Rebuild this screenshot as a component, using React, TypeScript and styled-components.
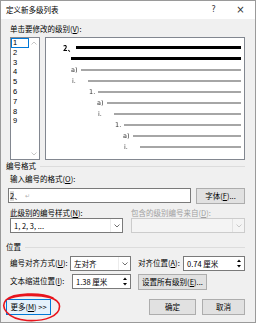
import React from 'react';
import styled, { createGlobalStyle } from 'styled-components';

const GlobalStyle = createGlobalStyle`
  html, body {
    margin: 0;
    padding: 0;
    background: #fff;
  }
  body {
    font-family: "Noto Sans CJK SC", "Noto Sans", sans-serif;
    font-size: 7.5px;
    color: #000;
  }
`;

const Dialog = styled.div`
  position: relative;
  width: 256px;
  height: 323px;
  box-sizing: border-box;
  border: 1px solid #9a9a9a;
  background: #f0f0f0;
  display: flex;
  flex-direction: column;
  overflow: hidden;
`;

const TitleBar = styled.div`
  height: 18px;
  background: #fff;
  display: flex;
  align-items: center;
  padding-left: 5px;
  padding-right: 1px;
`;

const Title = styled.span`
  flex: 1;
  line-height: 10px;
`;

const TitleButton = styled.span`
  width: 27px;
  text-align: center;
  font-family: "DejaVu Sans", sans-serif;
  font-size: ${(p: { $big?: boolean }) => (p.$big ? '10px' : '8px')};
  color: #333;
  line-height: 10px;
`;

const Body = styled.div`
  display: flex;
  flex-direction: column;
  padding: 0 10px 0 4px;
`;

const FieldLabel = styled.div<{ $top?: number; $disabled?: boolean; $flush?: boolean }>`
  margin-top: ${(p) => p.$top ?? 0}px;
  padding-left: ${(p) => (p.$flush ? 0 : 5)}px;
  line-height: 10px;
  white-space: nowrap;
  color: ${(p) => (p.$disabled ? '#a0a0a0' : '#000')};
`;

const TopRow = styled.div`
  margin-top: 3px;
  padding-left: 5px;
  height: 123px;
  display: flex;
  gap: 5px;
`;

const LevelList = styled.div`
  width: 30px;
  box-sizing: border-box;
  border: 1px solid #828790;
  background: #fff;
  display: flex;
`;

const LevelItems = styled.div`
  flex: 1;
  display: flex;
  flex-direction: column;
  font-family: "Liberation Sans", sans-serif;
  font-size: 7.5px;
`;

const LevelItem = styled.div<{ $selected?: boolean }>`
  height: 9.8px;
  box-sizing: border-box;
  padding-left: ${(p) => (p.$selected ? 1 : 2)}px;
  border: ${(p) => (p.$selected ? '1px solid #0078d7' : 'none')};
  line-height: ${(p) => (p.$selected ? 7.8 : 9.8)}px;
`;

const ScrollTrack = styled.div`
  width: 10px;
  display: flex;
  flex-direction: column;
  justify-content: space-between;
  align-items: center;
  padding: 3px 0;
`;

const Preview = styled.div`
  flex: 1;
  box-sizing: border-box;
  border: 1px solid #828790;
  background: #fff;
  padding: 4px 3px 0 0;
  display: flex;
  flex-direction: column;
`;

const PreviewRow = styled.div<{ $indent: number }>`
  height: 11px;
  display: flex;
  align-items: center;
  padding-left: ${(p) => p.$indent}px;
`;

const PreviewMark = styled.span<{ $w: number; $dark?: boolean }>`
  width: ${(p) => p.$w}px;
  flex: none;
  font-size: ${(p) => (p.$dark ? 7.5 : 6.5)}px;
  font-weight: ${(p) => (p.$dark ? 700 : 400)};
  line-height: 8px;
  color: ${(p) => (p.$dark ? '#000' : '#333')};
  font-family: ${(p) =>
    p.$dark ? '"Noto Sans CJK SC", sans-serif' : '"DejaVu Sans", "Noto Sans CJK SC", sans-serif'};
  white-space: nowrap;
  will-change: transform;
`;

const PreviewLine = styled.div<{ $dark?: boolean }>`
  flex: 1;
  height: ${(p) => (p.$dark ? 3 : 2)}px;
  background: ${(p) => (p.$dark ? '#000' : '#a6a6a6')};
`;

const GroupHeader = styled.div<{ $top: number }>`
  margin-top: ${(p) => p.$top}px;
  display: flex;
  align-items: center;
  gap: 4px;
  line-height: 10px;
  padding-left: 1px;
  &::after {
    content: '';
    flex: 1;
    height: 1px;
    background: #dcdcdc;
  }
`;

const InputRow = styled.div`
  margin-top: 4px;
  padding-left: 3px;
  display: flex;
  gap: 5px;
  align-items: flex-start;
`;

const TextBox = styled.div`
  width: 183px;
  height: 15px;
  box-sizing: border-box;
  border: 1px solid #7a7a7a;
  background: #fff;
  display: flex;
  align-items: center;
  padding-left: 1px;
  line-height: 10px;
`;

const FieldShade = styled.span`
  background: #d9d9d9;
`;

const ReturnMark = styled.span`
  color: #b0b0b0;
  font-size: 6px;
  margin-left: 3px;
`;

const Button = styled.div<{ $w: number; $focused?: boolean }>`
  width: ${(p) => p.$w}px;
  height: 16px;
  box-sizing: border-box;
  flex: none;
  border: 1px solid ${(p) => (p.$focused ? '#0078d7' : '#adadad')};
  background: ${(p) => (p.$focused ? '#e5f1fb' : '#e1e1e1')};
  display: flex;
  align-items: center;
  justify-content: center;
  line-height: 10px;
  white-space: nowrap;
`;

const TwoCol = styled.div<{ $top: number }>`
  margin-top: ${(p) => p.$top}px;
  padding-left: 5px;
  display: grid;
  grid-template-columns: 113px 114px;
  column-gap: 8px;
`;

const Combo = styled.div<{ $w?: number; $disabled?: boolean }>`
  width: ${(p) => (p.$w ? `${p.$w}px` : 'auto')};
  height: 15px;
  box-sizing: border-box;
  flex: none;
  border: 1px solid ${(p) => (p.$disabled ? '#cccccc' : '#7a7a7a')};
  background: ${(p) => (p.$disabled ? '#f4f4f4' : '#fff')};
  display: flex;
  align-items: center;
  line-height: 10px;
`;

const ComboText = styled.span`
  flex: 1;
  padding-left: 3px;
  white-space: nowrap;
  overflow: hidden;
`;

const ComboArrow = styled.span<{ $disabled?: boolean }>`
  width: 11px;
  align-self: stretch;
  display: flex;
  align-items: center;
  justify-content: center;
  border-left: 1px solid ${(p) => (p.$disabled ? '#e2e2e2' : '#ececec')};
`;

const SpinArrows = styled.span`
  width: 8px;
  align-self: stretch;
  display: flex;
  flex-direction: column;
  justify-content: space-around;
  align-items: center;
  padding: 1px 1px 1px 0;
`;

const PosRow = styled.div<{ $top: number }>`
  margin-top: ${(p) => p.$top}px;
  padding-left: 5px;
  display: flex;
  align-items: flex-start;
`;

const PosLabel = styled.span<{ $w: number }>`
  width: ${(p) => p.$w}px;
  flex: none;
  line-height: 14px;
  white-space: nowrap;
`;

const Gap = styled.span<{ $w: number }>`
  width: ${(p) => p.$w}px;
  flex: none;
`;

const Footer = styled.div`
  margin-top: 9px;
  padding-left: 1px;
  display: flex;
  align-items: center;
`;

const FooterSpacer = styled.div`
  flex: 1;
`;

const FooterButtons = styled.div`
  display: flex;
  gap: 6px;
`;

const Scribble = styled.svg`
  position: absolute;
  left: 0;
  top: 288px;
  pointer-events: none;
`;

const Chevron = ({ up, color = '#606060' }: { up?: boolean; color?: string }) => (
  <svg width="6" height="4" viewBox="0 0 6 4">
    <path
      d={up ? 'M0.5 3.5 L3 1 L5.5 3.5' : 'M0.5 0.5 L3 3 L5.5 0.5'}
      fill="none"
      stroke={color}
      strokeWidth="0.9"
    />
  </svg>
);

const Tri = ({ up }: { up?: boolean }) => (
  <svg width="4" height="3" viewBox="0 0 4 3">
    <path d={up ? 'M0 3 L2 0.5 L4 3 Z' : 'M0 0 L2 2.5 L4 0 Z'} fill="#000" />
  </svg>
);

const previewRows = [
  { indent: 17, w: 13, mark: '2、', dark: true },
  { indent: 25, w: 0, mark: '', dark: true },
  { indent: 25, w: 10, mark: 'a)' },
  { indent: 26, w: 16, mark: 'i.' },
  { indent: 43, w: 9, mark: '1.' },
  { indent: 51, w: 10, mark: 'a)' },
  { indent: 52, w: 16, mark: 'i.' },
  { indent: 69, w: 9, mark: '1.' },
  { indent: 77, w: 10, mark: 'a)' },
  { indent: 78, w: 16, mark: 'i.' },
];

const levels = ['1', '2', '3', '4', '5', '6', '7', '8', '9'];

export default function App() {
  return (
    <>
      <GlobalStyle />
      <Dialog>
        <TitleBar>
          <Title>定义新多级列表</Title>
          <TitleButton>?</TitleButton>
          <TitleButton $big>×</TitleButton>
        </TitleBar>

        <Body>
          <FieldLabel $top={5}>
            单击要修改的级别(<u>V</u>):
          </FieldLabel>
          <TopRow>
            <LevelList>
              <LevelItems>
                {levels.map((l, i) => (
                  <LevelItem key={l} $selected={i === 0}>
                    {l}
                  </LevelItem>
                ))}
              </LevelItems>
              <ScrollTrack>
                <Chevron up color="#c0c0c0" />
                <Chevron color="#c0c0c0" />
              </ScrollTrack>
            </LevelList>
            <Preview>
              {previewRows.map((r, i) => (
                <PreviewRow key={i} $indent={r.indent}>
                  <PreviewMark $w={r.w} $dark={r.dark}>
                    {r.mark}
                  </PreviewMark>
                  <PreviewLine $dark={r.dark} />
                </PreviewRow>
              ))}
            </Preview>
          </TopRow>

          <GroupHeader $top={1}>编号格式</GroupHeader>
          <FieldLabel $top={3}>
            输入编号的格式(<u>O</u>):
          </FieldLabel>
          <InputRow>
            <TextBox>
              <FieldShade>2</FieldShade>、<ReturnMark>↵</ReturnMark>
            </TextBox>
            <Button $w={49}>
              字体(<u>F</u>)...
            </Button>
          </InputRow>

          <TwoCol $top={4}>
            <FieldLabel as="span" $flush>
              此级别的编号样式(<u>N</u>):
            </FieldLabel>
            <FieldLabel as="span" $flush $disabled>
              包含的级别编号来自(<u>D</u>):
            </FieldLabel>
            <Combo>
              <ComboText>1, 2, 3, ...</ComboText>
              <ComboArrow>
                <Chevron />
              </ComboArrow>
            </Combo>
            <Combo $disabled>
              <ComboText />
              <ComboArrow $disabled>
                <Chevron color="#c4c4c4" />
              </ComboArrow>
            </Combo>
          </TwoCol>

          <GroupHeader $top={9}>位置</GroupHeader>
          <PosRow $top={4}>
            <PosLabel $w={60}>
              编号对齐方式(<u>U</u>):
            </PosLabel>
            <Combo $w={61}>
              <ComboText>左对齐</ComboText>
              <ComboArrow>
                <Chevron />
              </ComboArrow>
            </Combo>
            <Gap $w={7} />
            <PosLabel $w={45}>
              对齐位置(<u>A</u>):
            </PosLabel>
            <Combo $w={62}>
              <ComboText>0.74 厘米</ComboText>
              <SpinArrows>
                <Tri up />
                <Tri />
              </SpinArrows>
            </Combo>
          </PosRow>
          <PosRow $top={3}>
            <PosLabel $w={62}>
              文本缩进位置(<u>I</u>):
            </PosLabel>
            <Combo $w={59}>
              <ComboText>1.38 厘米</ComboText>
              <SpinArrows>
                <Tri up />
                <Tri />
              </SpinArrows>
            </Combo>
            <Gap $w={7} />
            <Button $w={69}>
              设置所有级别(<u>E</u>)...
            </Button>
          </PosRow>

          <Footer>
            <Button $w={45} $focused>
              更多(<u>M</u>) &gt;&gt;
            </Button>
            <FooterSpacer />
            <FooterButtons>
              <Button $w={47}>确定</Button>
              <Button $w={43}>取消</Button>
            </FooterButtons>
          </Footer>
        </Body>

        <Scribble width="64" height="35" viewBox="0 288 64 35">
          <path
            d="M52 297 C40 291, 12 292, 5 299 C-1 306, 6 318, 26 319.5 C44 320.5, 59 315, 58.5 305 C58 297, 44 293.5, 24 294.5 C16 295, 10 296.5, 7 298"
            fill="none"
            stroke="#e8141c"
            strokeWidth="1.6"
            strokeLinecap="round"
          />
        </Scribble>
      </Dialog>
    </>
  );
}
